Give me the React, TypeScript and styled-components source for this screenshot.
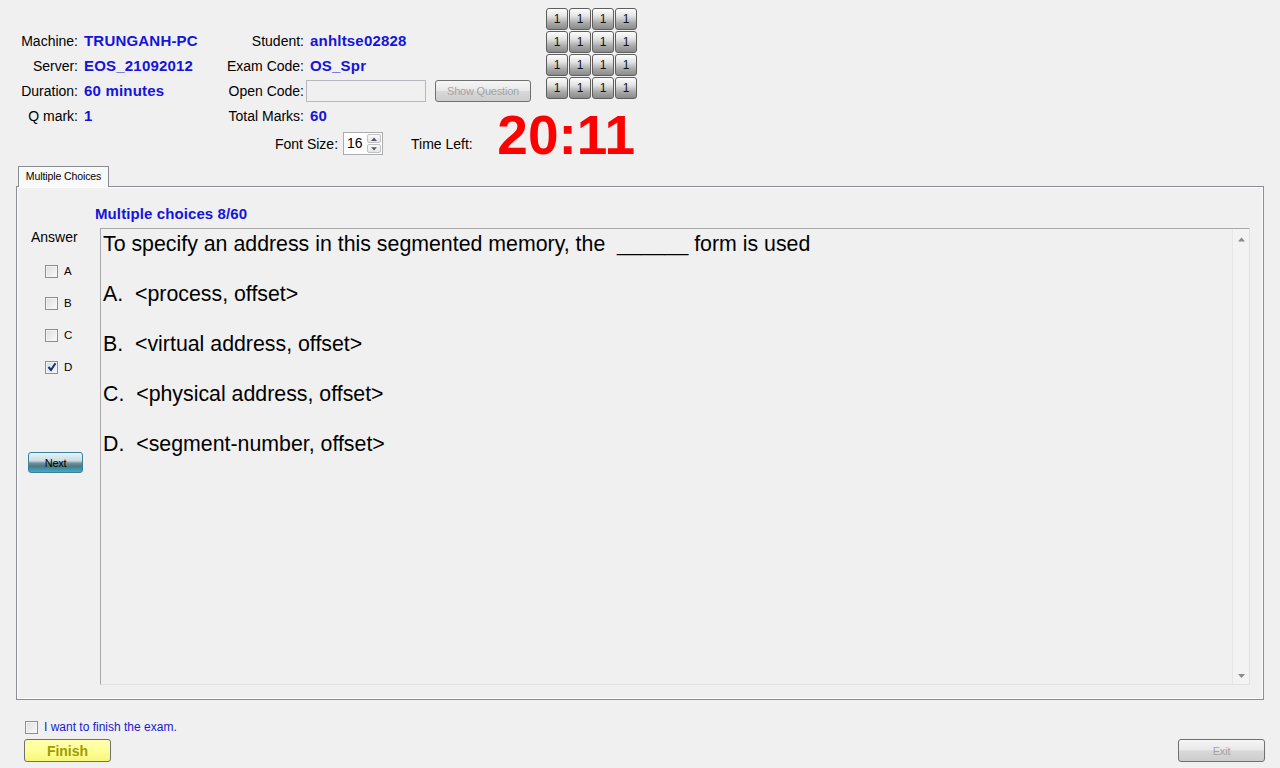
import { createGlobalStyle } from 'styled-components';
import styled from 'styled-components';

const GlobalStyle = createGlobalStyle`
  html, body {
    margin: 0;
    padding: 0;
    background: #f0f0f0;
    font-family: "Liberation Sans", Arial, sans-serif;
    color: #000;
  }
  * { box-sizing: border-box; }
`;

const BLUE = '#1414dc';

const S = {
  Page: styled.div`
    width: 1280px;
    height: 768px;
    overflow: hidden;
  `,

  Header: styled.header`
    display: flex;
    height: 166px;
  `,

  LeftInfo: styled.div`
    width: 499px;
    display: flex;
    flex-direction: column;
  `,

  InfoGrid: styled.div`
    display: grid;
    grid-template-columns: 78px 148px 78px 1fr;
    grid-auto-rows: 25px;
    align-items: center;
    padding-top: 28px;
  `,

  Label: styled.span`
    font-size: 14px;
    text-align: right;
    white-space: nowrap;
  `,

  Value: styled.span`
    font-size: 15px;
    font-weight: bold;
    color: ${BLUE};
    padding-left: 6px;
    white-space: nowrap;
    letter-spacing: 0.2px;
  `,

  CodeCell: styled.div`
    display: flex;
    align-items: center;
    padding-left: 2px;
  `,

  CodeInput: styled.div`
    width: 120px;
    height: 22px;
    border: 1px solid #b5b7bd;
    background: #f0f0f0;
  `,

  GlossButton: styled.div<{ $w: number; $h: number; $disabled?: boolean }>`
    width: ${({ $w }) => $w}px;
    height: ${({ $h }) => $h}px;
    display: flex;
    align-items: center;
    justify-content: center;
    border: 1px solid #707070;
    border-radius: 3px;
    background: linear-gradient(#f6f6f6 0%, #e8e8e8 48%, #d8d8d8 52%, #cdcdcd 100%);
    font-size: 11px;
    letter-spacing: -0.2px;
    color: ${({ $disabled }) => ($disabled ? '#a3a3a3' : '#000')};
  `,

  FontRow: styled.div`
    display: flex;
    align-items: center;
    height: 23px;
    margin-top: 4px;
    padding-left: 275px;
    font-size: 14px;
  `,

  Spinner: styled.div`
    display: flex;
    width: 40px;
    height: 23px;
    margin-left: 5px;
    border: 1px solid #abadb3;
    background: #fff;
  `,

  SpinValue: styled.span`
    flex: 1;
    font-size: 14px;
    line-height: 21px;
    padding-left: 3px;
  `,

  SpinArrows: styled.div`
    display: flex;
    flex-direction: column;
    gap: 1px;
    width: 15px;
    padding: 1px 1px 1px 0;
  `,

  SpinArrow: styled.div`
    flex: 1;
    display: flex;
    align-items: center;
    justify-content: center;
    border: 1px solid #c2c2c2;
    border-radius: 2px;
    background: linear-gradient(#f9f9f9, #e6e6e6);
  `,

  TimeLabel: styled.span`
    margin-left: 28px;
  `,

  RightCol: styled.div`
    width: 138px;
    display: flex;
    flex-direction: column;
    align-items: flex-end;
  `,

  QuestionGrid: styled.div`
    display: grid;
    grid-template-columns: repeat(4, 22px);
    grid-auto-rows: 22px;
    gap: 1px;
    margin-top: 8px;
  `,

  GridButton: styled.div`
    display: flex;
    align-items: center;
    justify-content: center;
    border: 1px solid #5e5e5e;
    border-radius: 3px;
    background: linear-gradient(#fdfdfd 0%, #e4e4e4 35%, #a9a9a9 70%, #8a8a8a 100%);
    font-size: 12px;
    color: #111;
  `,

  Timer: styled.div`
    margin-top: 9px;
    margin-right: 2px;
    font-size: 55px;
    line-height: 55px;
    font-weight: bold;
    color: #ff0000;
  `,

  TabArea: styled.section`
    margin: 0 16px;
  `,

  TabStrip: styled.div`
    display: flex;
    height: 20px;
    padding-left: 2px;
  `,

  Tab: styled.div`
    position: relative;
    z-index: 1;
    width: 91px;
    height: 21px;
    border: 1px solid #898c95;
    border-bottom: none;
    background: #f9f9f9;
    font-size: 10.5px;
    line-height: 19px;
    text-align: center;
    letter-spacing: -0.1px;
  `,

  Panel: styled.div`
    height: 514px;
    border: 1px solid #898c95;
    box-shadow: inset 1px 1px 0 #fff, inset -1px -1px 0 #fff;
    background: #f0f0f0;
    display: grid;
    grid-template-columns: 83px 1fr;
    grid-template-rows: 17px 1fr;
    row-gap: 6px;
    padding: 18px 13px 14px 0;
  `,

  Title: styled.div`
    grid-column: 1 / span 2;
    padding-left: 78px;
    font-size: 15px;
    line-height: 17px;
    font-weight: bold;
    letter-spacing: 0.1px;
    color: ${BLUE};
  `,

  AnswerCol: styled.div`
    display: flex;
    flex-direction: column;
  `,

  AnswerLabel: styled.div`
    font-size: 14px;
    line-height: 17px;
    padding-left: 14px;
    margin-top: 1px;
  `,

  ChoiceList: styled.div`
    display: flex;
    flex-direction: column;
    margin-top: 9px;
    padding-left: 28px;
  `,

  ChoiceRow: styled.label`
    display: flex;
    align-items: center;
    gap: 6px;
    height: 32px;
    font-size: 11.5px;
  `,

  CheckBox: styled.span<{ $checked?: boolean }>`
    width: 13px;
    height: 13px;
    display: flex;
    align-items: center;
    justify-content: center;
    border: 1px solid #8e8f8f;
    background: ${({ $checked }) =>
      $checked
        ? 'linear-gradient(135deg, #c9dff3, #f4f9fe)'
        : 'linear-gradient(135deg, #dcdcdc, #fbfbfb)'};
    box-shadow: inset 0 0 0 1px #f4f4f4;
  `,

  NextButton: styled.div`
    width: 55px;
    height: 21px;
    margin: 69px 0 0 11px;
    display: flex;
    align-items: center;
    justify-content: center;
    border: 1px solid #3c7f9a;
    border-radius: 3px;
    background: linear-gradient(#e9f3f6 0%, #c8dde3 40%, #6f8d97 55%, #4d7785 70%, #37b0cc 100%);
    font-size: 11px;
    letter-spacing: -0.3px;
  `,

  QuestionBox: styled.div`
    display: flex;
    border: 1px solid #a9a9a9;
    border-right-color: #e2e2e2;
    border-bottom-color: #e2e2e2;
    background: #f0f0f0;
    min-height: 0;
  `,

  QuestionText: styled.div`
    flex: 1;
    padding: 3px 0 0 2px;
  `,

  QuestionLine: styled.p`
    margin: 0 0 25px;
    font-size: 21.33px;
    line-height: 25px;
    white-space: pre;
  `,

  ScrollBar: styled.div`
    width: 17px;
    display: flex;
    flex-direction: column;
    justify-content: space-between;
    align-items: center;
    padding: 8px 0 6px;
    border-left: 1px solid #e6e6e6;
    background: #f3f3f3;
  `,

  Footer: styled.footer`
    padding: 20px 15px 0 24px;
  `,

  FinishCheckRow: styled.label`
    display: flex;
    align-items: center;
    height: 14px;
    padding-left: 1px;
    gap: 6px;
    font-size: 12px;
    line-height: 13px;
    color: #1a1ad0;
  `,

  ButtonRow: styled.div`
    display: flex;
    justify-content: space-between;
    margin-top: 5px;
  `,

  FinishButton: styled.div`
    width: 87px;
    height: 23px;
    display: flex;
    align-items: center;
    justify-content: center;
    border: 1px solid #707070;
    border-radius: 3px;
    background: linear-gradient(#ffffb0 0%, #ffff9a 50%, #f6f67a 100%);
    font-size: 14px;
    font-weight: bold;
    color: #9c9c00;
  `,
};

function Check() {
  return (
    <svg width="10" height="10" viewBox="0 0 10 10">
      <path d="M1.5 5 L4 8 L8.5 1.2" fill="none" stroke="#1c2f6e" strokeWidth="2" />
    </svg>
  );
}

function Triangle({ up, size = 7, color = '#5a5a5a' }: { up: boolean; size?: number; color?: string }) {
  return (
    <svg width={size} height={size / 2 + 1} viewBox="0 0 8 5">
      <path d={up ? 'M0 5 L4 0.5 L8 5 Z' : 'M0 0 L4 4.5 L8 0 Z'} fill={color} />
    </svg>
  );
}

const choices = ['A', 'B', 'C', 'D'];
const questionLines = [
  'To specify an address in this segmented memory, the  ______ form is used',
  'A.  <process, offset>',
  'B.  <virtual address, offset>',
  'C.  <physical address, offset>',
  'D.  <segment-number, offset>',
];

function App() {
  return (
    <S.Page>
      <GlobalStyle />
      <S.Header>
        <S.LeftInfo>
          <S.InfoGrid>
            <S.Label>Machine:</S.Label>
            <S.Value>TRUNGANH-PC</S.Value>
            <S.Label>Student:</S.Label>
            <S.Value>anhltse02828</S.Value>

            <S.Label>Server:</S.Label>
            <S.Value>EOS_21092012</S.Value>
            <S.Label>Exam Code:</S.Label>
            <S.Value>OS_Spr</S.Value>

            <S.Label>Duration:</S.Label>
            <S.Value>60 minutes</S.Value>
            <S.Label>Open Code:</S.Label>
            <S.CodeCell>
              <S.CodeInput />
              <S.GlossButton $w={96} $h={22} $disabled style={{ marginLeft: 9 }}>
                Show Question
              </S.GlossButton>
            </S.CodeCell>

            <S.Label>Q mark:</S.Label>
            <S.Value>1</S.Value>
            <S.Label>Total Marks:</S.Label>
            <S.Value>60</S.Value>
          </S.InfoGrid>

          <S.FontRow>
            <span>Font Size:</span>
            <S.Spinner>
              <S.SpinValue>16</S.SpinValue>
              <S.SpinArrows>
                <S.SpinArrow>
                  <Triangle up size={6} color="#4d5b77" />
                </S.SpinArrow>
                <S.SpinArrow>
                  <Triangle up={false} size={6} color="#4d5b77" />
                </S.SpinArrow>
              </S.SpinArrows>
            </S.Spinner>
            <S.TimeLabel>Time Left:</S.TimeLabel>
          </S.FontRow>
        </S.LeftInfo>

        <S.RightCol>
          <S.QuestionGrid>
            {Array.from({ length: 16 }).map((_, i) => (
              <S.GridButton key={i}>1</S.GridButton>
            ))}
          </S.QuestionGrid>
          <S.Timer>20:11</S.Timer>
        </S.RightCol>
      </S.Header>

      <S.TabArea>
        <S.TabStrip>
          <S.Tab>Multiple Choices</S.Tab>
        </S.TabStrip>
        <S.Panel>
          <S.Title>Multiple choices 8/60</S.Title>
          <S.AnswerCol>
            <S.AnswerLabel>Answer</S.AnswerLabel>
            <S.ChoiceList>
              {choices.map((c) => (
                <S.ChoiceRow key={c}>
                  <S.CheckBox $checked={c === 'D'}>{c === 'D' && <Check />}</S.CheckBox>
                  {c}
                </S.ChoiceRow>
              ))}
            </S.ChoiceList>
            <S.NextButton>Next</S.NextButton>
          </S.AnswerCol>
          <S.QuestionBox>
            <S.QuestionText>
              {questionLines.map((line) => (
                <S.QuestionLine key={line}>{line}</S.QuestionLine>
              ))}
            </S.QuestionText>
            <S.ScrollBar>
              <Triangle up size={7} color="#8a8a8a" />
              <Triangle up={false} size={7} color="#8a8a8a" />
            </S.ScrollBar>
          </S.QuestionBox>
        </S.Panel>
      </S.TabArea>

      <S.Footer>
        <S.FinishCheckRow>
          <S.CheckBox />
          I want to finish the exam.
        </S.FinishCheckRow>
        <S.ButtonRow>
          <S.FinishButton>Finish</S.FinishButton>
          <S.GlossButton $w={87} $h={23} $disabled>
            Exit
          </S.GlossButton>
        </S.ButtonRow>
      </S.Footer>
    </S.Page>
  );
}

export default App;
